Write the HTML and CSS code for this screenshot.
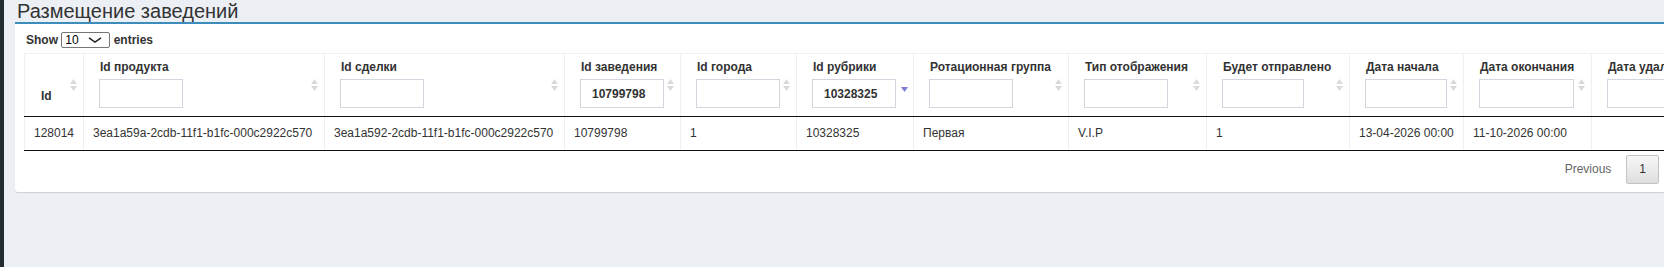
FILE: index.html
```html
<!DOCTYPE html>
<html lang="ru">

<head>
    <meta charset="UTF-8">
    <meta name="viewport" content="width=device-width, initial-scale=1.0">
    <title>Размещение заведений</title>
    <link rel="stylesheet" href="styles.css">
</head>

<body>

    <aside class="sidebar"></aside>

    <div class="content-wrapper">
        <h1 class="page-title">Размещение заведений</h1>

        <div class="box">
            <div class="box-body">

                <div class="dt-length">Show <span class="dt-select">10 <svg width="14" height="6" viewBox="0 0 14 6"><polyline points="1,0.8 7,5 13,0.8" fill="none" stroke="#222" stroke-width="1.5"/></svg></span> entries</div>

                <div class="dt-scroll">
                    <table class="dt-table">
                        <thead>
                            <tr>
                                <th class="col-id">
                                    <span class="th-label">Id</span>
                                    <svg class="sort-both" width="7" height="12" viewBox="0 0 7 12"><path d="M3.5 0L7 5H0Z M0 7H7L3.5 12Z"/></svg>
                                </th>
                                <th class="col-product">
                                    <span class="th-label">Id продукта</span>
                                    <input class="filter" type="text">
                                    <svg class="sort-both" width="7" height="12" viewBox="0 0 7 12"><path d="M3.5 0L7 5H0Z M0 7H7L3.5 12Z"/></svg>
                                </th>
                                <th class="col-deal">
                                    <span class="th-label">Id сделки</span>
                                    <input class="filter" type="text">
                                    <svg class="sort-both" width="7" height="12" viewBox="0 0 7 12"><path d="M3.5 0L7 5H0Z M0 7H7L3.5 12Z"/></svg>
                                </th>
                                <th class="col-place">
                                    <span class="th-label">Id заведения</span>
                                    <input class="filter" type="text" value="10799798">
                                    <svg class="sort-both" width="7" height="12" viewBox="0 0 7 12"><path d="M3.5 0L7 5H0Z M0 7H7L3.5 12Z"/></svg>
                                </th>
                                <th class="col-city">
                                    <span class="th-label">Id города</span>
                                    <input class="filter" type="text">
                                    <svg class="sort-both" width="7" height="12" viewBox="0 0 7 12"><path d="M3.5 0L7 5H0Z M0 7H7L3.5 12Z"/></svg>
                                </th>
                                <th class="col-rubric">
                                    <span class="th-label">Id рубрики</span>
                                    <input class="filter" type="text" value="10328325">
                                    <svg class="sort-desc" width="7" height="5" viewBox="0 0 7 5"><path d="M0 0H7L3.5 5Z"/></svg>
                                </th>
                                <th class="col-rotation">
                                    <span class="th-label">Ротационная группа</span>
                                    <input class="filter" type="text">
                                    <svg class="sort-both" width="7" height="12" viewBox="0 0 7 12"><path d="M3.5 0L7 5H0Z M0 7H7L3.5 12Z"/></svg>
                                </th>
                                <th class="col-type">
                                    <span class="th-label">Тип отображения</span>
                                    <input class="filter" type="text">
                                    <svg class="sort-both" width="7" height="12" viewBox="0 0 7 12"><path d="M3.5 0L7 5H0Z M0 7H7L3.5 12Z"/></svg>
                                </th>
                                <th class="col-sent">
                                    <span class="th-label">Будет отправлено</span>
                                    <input class="filter filter-narrow" type="text">
                                    <svg class="sort-both" width="7" height="12" viewBox="0 0 7 12"><path d="M3.5 0L7 5H0Z M0 7H7L3.5 12Z"/></svg>
                                </th>
                                <th class="col-start">
                                    <span class="th-label">Дата начала</span>
                                    <input class="filter filter-narrow" type="text">
                                    <svg class="sort-both" width="7" height="12" viewBox="0 0 7 12"><path d="M3.5 0L7 5H0Z M0 7H7L3.5 12Z"/></svg>
                                </th>
                                <th class="col-end">
                                    <span class="th-label">Дата окончания</span>
                                    <input class="filter filter-wide" type="text">
                                    <svg class="sort-both" width="7" height="12" viewBox="0 0 7 12"><path d="M3.5 0L7 5H0Z M0 7H7L3.5 12Z"/></svg>
                                </th>
                                <th class="col-deleted">
                                    <span class="th-label">Дата удаления</span>
                                    <input class="filter filter-wide" type="text">
                                    <svg class="sort-both" width="7" height="12" viewBox="0 0 7 12"><path d="M3.5 0L7 5H0Z M0 7H7L3.5 12Z"/></svg>
                                </th>
                            </tr>
                        </thead>
                        <tbody>
                            <tr>
                                <td>128014</td>
                                <td>3ea1a59a-2cdb-11f1-b1fc-000c2922c570</td>
                                <td>3ea1a592-2cdb-11f1-b1fc-000c2922c570</td>
                                <td>10799798</td>
                                <td>1</td>
                                <td>10328325</td>
                                <td>Первая</td>
                                <td>V.I.P</td>
                                <td>1</td>
                                <td>13-04-2026 00:00</td>
                                <td>11-10-2026 00:00</td>
                                <td></td>
                            </tr>
                        </tbody>
                    </table>
                </div>

                <div class="dt-paginate">
                    <span class="page-btn disabled">Previous</span>
                    <span class="page-btn current">1</span>
                </div>

            </div>
        </div>
    </div>

</body>

</html>
```

FILE: styles.css
```css
html,
body {
    height: 100%;
}

body {
    font-family: "Liberation Sans", Arial, sans-serif;
    font-size: 12px;
    color: #333;
    background-color: #ecf0f5;
    display: flex;
    margin: 0;
    overflow: hidden;
}

.sidebar {
    width: 4px;
    flex-shrink: 0;
    background-color: #222d32;
}

.content-wrapper {
    flex: 1;
    min-width: 0;
    padding-left: 11px;
}

.page-title {
    margin: 0;
    padding-left: 2px;
    font-size: 20px;
    font-weight: normal;
    line-height: 22px;
    height: 22px;
    color: #333;
}

.box {
    background-color: #fff;
    border-top: 2px solid #3c8dbc;
    border-radius: 0 0 0 3px;
    box-shadow: 0 1px 1px rgba(0, 0, 0, 0.14);
}

.box-body {
    padding: 8px 0 8px 9px;
}

.dt-length {
    font-weight: bold;
    line-height: 16px;
    height: 16px;
    padding-left: 2px;
    margin-bottom: 5px;
    white-space: nowrap;
}

.dt-select {
    display: inline-flex;
    align-items: center;
    justify-content: space-between;
    vertical-align: top;
    box-sizing: border-box;
    width: 49px;
    height: 16px;
    padding: 0 7px 0 3px;
    border: 1px solid #767676;
    border-radius: 2px;
    font-weight: normal;
    line-height: 14px;
    color: #000;
}

.dt-scroll {
    overflow: hidden;
}

.dt-table {
    border-collapse: collapse;
    table-layout: fixed;
    width: 1716px;
}

.dt-table th {
    position: relative;
    box-sizing: border-box;
    padding: 5px 18px 8px 16px;
    border: 1px solid #f0f0f0;
    border-bottom: 1px solid #111;
    text-align: left;
    vertical-align: bottom;
    font-weight: bold;
    line-height: 17px;
}

.th-label {
    display: block;
    margin-bottom: 3px;
    white-space: nowrap;
}

.filter {
    display: block;
    box-sizing: border-box;
    width: 84px;
    height: 29px;
    margin: 0 0 0 -1px;
    padding: 0 11px;
    border: 1px solid #d2d6de;
    font: inherit;
    color: #333;
    outline: none;
}

.filter-narrow {
    width: 82px;
}

.filter-wide {
    width: 95px;
}

.sort-both {
    position: absolute;
    right: 6px;
    top: 50%;
    margin-top: -6px;
    fill: #dadada;
}

.sort-desc {
    position: absolute;
    right: 5px;
    top: 50%;
    margin-top: 2px;
    fill: #7f7fd6;
}

.dt-table td {
    padding: 8px 9px;
    border-left: 1px solid #f0f0f0;
    border-right: 1px solid #f0f0f0;
    border-bottom: 1px solid #111;
    line-height: 17px;
    white-space: nowrap;
    overflow: hidden;
}

.col-id { width: 59px; }
.col-product { width: 241px; }
.col-deal { width: 240px; }
.col-place { width: 116px; }
.col-city { width: 116px; }
.col-rubric { width: 117px; }
.col-rotation { width: 155px; }
.col-type { width: 138px; }
.col-sent { width: 143px; }
.col-start { width: 114px; }
.col-end { width: 128px; }
.col-deleted { width: 150px; }

.dt-paginate {
    display: flex;
    justify-content: flex-end;
    margin: 4px 5px 0 0;
}

.page-btn {
    box-sizing: border-box;
    padding: 5px 12px;
    margin-left: 2px;
    border: 1px solid transparent;
    border-radius: 2px;
    line-height: 17px;
}

.page-btn.disabled {
    color: #666;
}

.page-btn.current {
    color: #333;
    border-color: #c4c4c4;
    background: linear-gradient(to bottom, #f7f7f7 0%, #dedede 100%);
}
```
